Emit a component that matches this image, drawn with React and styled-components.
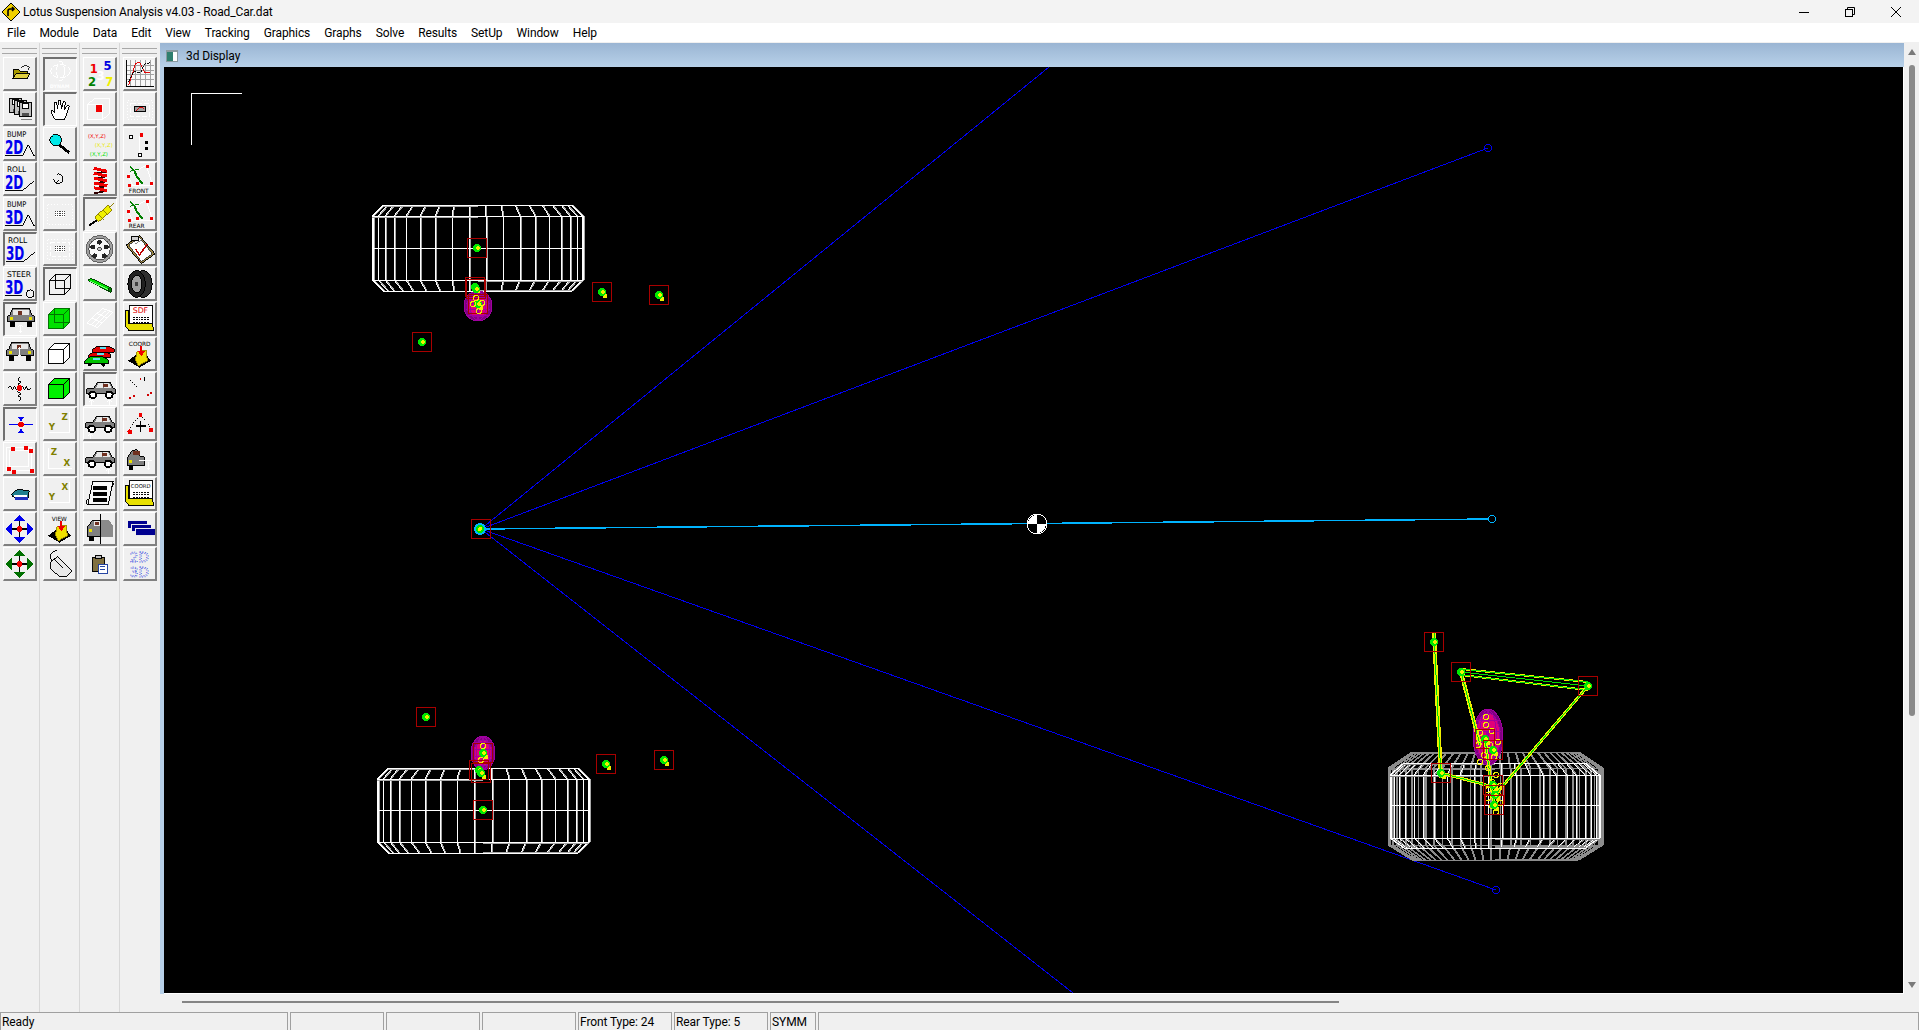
import React from 'react';
import styled, { createGlobalStyle } from 'styled-components';

const GlobalStyle = createGlobalStyle`
	html, body {
		margin: 0;
		padding: 0;
		overflow: hidden;
		background: #f0f0f0;
	}
`;

const Page = styled.div`
	width: 1919px;
	height: 1030px;
	display: flex;
	flex-direction: column;
	overflow: hidden;
	font-family: Roboto, 'Liberation Sans', sans-serif;
	font-size: 12px;
	color: #000;
`;

const TitleBar = styled.div`
	height: 23px;
	display: flex;
	align-items: center;
	background: #f3f3f3;
	padding-left: 2px;
`;

const TitleText = styled.span`
	margin-left: 3px;
	flex: 1;
	font-size: 12px;
	letter-spacing: -0.13px;
`;

const WindowButton = styled.div`
	width: 46px;
	height: 23px;
	display: flex;
	align-items: center;
	justify-content: center;
`;

const MenuBar = styled.div`
	height: 20px;
	display: flex;
	align-items: center;
	padding-top: 1px;
	background: #fff;
	border-bottom: 1px solid #f0f0f0;
	box-sizing: border-box;
`;

const MenuItem = styled.span`
	padding: 0 7px;
	line-height: 18px;
	letter-spacing: -0.1px;
`;

const Workspace = styled.div`
	height: 969px;
	display: flex;
`;

const ToolDock = styled.div`
	display: flex;
	width: 160px;
	flex: none;
	background: #f0f0f0;
`;

const ToolColumn = styled.div`
	width: 40px;
	box-sizing: border-box;
	padding: 0 2px 0 3px;
	display: flex;
	flex-direction: column;
	gap: 1px;
	border-right: 1px solid #d8d8d8;
	&:last-child {
		border-right: none;
	}
`;

const Grip = styled.div`
	height: 4px;
	margin: 5px 0 2px -1px;
	width: 35px;
	border-top: 1px solid #a8a8a8;
	border-bottom: 1px solid #a8a8a8;
`;

const ToolButton = styled.div`
	width: 34px;
	height: 34px;
	box-sizing: border-box;
	background: #f0f0f0;
	border: 1px solid;
	border-color: ${p => (p.$down ? '#707070 #fff #fff #707070' : '#fff #808080 #808080 #fff')};
	border-width: ${p => (p.$down ? '2px 1px 1px 2px' : '1px 2px 2px 1px')};
	display: flex;
	align-items: center;
	justify-content: center;
	overflow: hidden;
`;

const MdiColumn = styled.div`
	flex: 1;
	display: flex;
	flex-direction: column;
	min-width: 0;
`;

const MdiRow = styled.div`
	height: 951px;
	display: flex;
`;

const ChildWindow = styled.div`
	width: 1744px;
	display: flex;
	flex-direction: column;
	background: #b7d0e8;
	box-sizing: border-box;
`;

const ChildTitle = styled.div`
	height: 24px;
	flex: none;
	display: flex;
	align-items: center;
	gap: 8px;
	padding: 1px 0 0 6px;
	box-sizing: border-box;
	letter-spacing: -0.1px;
	background: linear-gradient(#9ab5d3, #b8d1e9);
`;

const ChildIcon = styled.div`
	width: 12px;
	height: 12px;
	box-sizing: border-box;
	border: 1px solid #8a9aa0;
	border-top-width: 2px;
	background: linear-gradient(90deg, #2f7f6f 0 60%, #fff 60%);
`;

const CanvasFrame = styled.div`
	margin-left: 4px;
	height: 927px;
	background: #000;
	border-right: 1px solid #fff;
	border-bottom: 1px solid #fff;
	box-sizing: border-box;
	display: flex;
`;

const VScroll = styled.div`
	width: 15px;
	flex: none;
	display: flex;
	flex-direction: column;
	align-items: center;
	padding: 6px 0;
	box-sizing: border-box;
	background: #f0f0f0;
`;

const ScrollArrow = styled.div`
	width: 0;
	height: 0;
	border-left: 4px solid transparent;
	border-right: 4px solid transparent;
	${p => (p.$down ? 'border-top: 6px solid #7a7a7a; margin-top: auto;' : 'border-bottom: 6px solid #7a7a7a;')}
`;

const ScrollThumb = styled.div`
	width: 6px;
	height: 651px;
	margin-top: 10px;
	background: #8a8a8a;
	border-radius: 3px;
`;

const HScroll = styled.div`
	height: 18px;
	display: flex;
	align-items: center;
	padding: 0 0 2px 22px;
	box-sizing: border-box;
`;

const HThumb = styled.div`
	width: 1157px;
	height: 2px;
	background: #858585;
`;

const StatusBar = styled.div`
	height: 18px;
	display: flex;
	gap: 2px;
	background: #f0f0f0;
`;

const StatusPane = styled.div`
	width: ${p => (p.$w ? `${p.$w}px` : 'auto')};
	flex: ${p => (p.$w ? 'none' : '1')};
	box-sizing: border-box;
	border-top: 1px solid #a0a0a0;
	border-left: 1px solid #a0a0a0;
	border-right: 1px solid #a0a0a0;
	padding-left: 1px;
	line-height: 18px;
	white-space: nowrap;
	letter-spacing: -0.1px;
`;

const PX = { shapeRendering: 'crispEdges' };
const SMALL = { fontFamily: 'DejaVu Sans, sans-serif', shapeRendering: 'auto' };

const Ico = ({ children }) => (
	<svg width="32" height="32" viewBox="1 1 32 32" style={PX}>
		{children}
	</svg>
);

const Label = ({ x, y, size = 7.5, w, fill = '#000', bold, children }) => (
	<text x={x} y={y} fontSize={size} fill={fill} fontWeight={bold ? 700 : 400} textLength={w} lengthAdjust={w ? 'spacingAndGlyphs' : undefined} style={SMALL}>
		{children}
	</text>
);

const CurveIcon = ({ top, big, kind }) => (
	<Ico>
		<Label x={4} y={10} size={8} w={top.length * 5}>{top}</Label>
		<Label x={2} y={27} size={20} w={19} fill="#0000f0" bold>{big}</Label>
		<polyline points="2,29 20,29" fill="none" stroke="#000" />
		{kind === 'bump' && <polyline points="20,29 26,18 32,29 33,29" fill="none" stroke="#000" />}
		{kind === 'roll' && <polyline points="20,29 32,19" fill="none" stroke="#000" />}
		{kind === 'steer' && <circle cx="28" cy="27" r="4" fill="#f0f0f0" stroke="#000" />}
	</Ico>
);

const Folder = () => (
	<Ico>
		<polygon points="11,12 16,12 17,14 25,14 25,18 11,22" fill="#a89a00" stroke="#000" />
		<polygon points="10,22 14,16 28,16 25,22" fill="#e0d040" stroke="#000" />
		<polyline points="19,10 23,8 27,10 26,13" fill="none" stroke="#222" />
	</Ico>
);

const Floppies = () => (
	<Ico>
		{[7, 12, 17].map((v, i) => (
			<g key={v}>
				<rect x={v} y={6 + i * 2} width={12} height={15} fill="#c0c0c0" stroke="#000" />
				<rect x={v + 3} y={7 + i * 2} width={6} height={5} fill="#fff" stroke="#000" />
				<rect x={v + 3} y={17 + i * 2} width={7} height={3} fill="#505050" />
			</g>
		))}
		<rect x="19" y="27" width="11" height="1" fill="#808080" />
	</Ico>
);

const Arrow = ({ x, y, down, color = '#fff', len = 7 }) => (
	<g stroke={color} fill="none">
		<line x1={x} y1={y} x2={x} y2={y + len} />
		<polyline points={down ? `${x - 2},${y + len - 2} ${x},${y + len} ${x + 2},${y + len - 2}` : `${x - 2},${y + 2} ${x},${y} ${x + 2},${y + 2}`} />
	</g>
);

const CarFront = ({ arrow }) => (
	<Ico>
		<polygon points="9,5 26,5 29,12 31,13 31,19 4,19 4,13 6,12" fill="#808080" stroke="#000" />
		<rect x="9" y="7" width="17" height="5" fill="#e8e8e8" />
		<rect x="14" y="8" width="5" height="4" fill="#703020" />
		<rect x="6" y="14" width="3" height="3" fill="#e8e000" />
		<rect x="26" y="14" width="3" height="3" fill="#e8e000" />
		<rect x="6" y="19" width="5" height="5" fill="#000" />
		<rect x="24" y="19" width="5" height="5" fill="#000" />
		{arrow === 'in' ? (
			<>
				<Arrow x={17} y={10} color="#fff" len={5} />
				<Arrow x={17} y={15} down color="#fff" len={5} />
			</>
		) : (
			<>
				<Arrow x={17} y={22} color="#fff" len={4} />
				<Arrow x={17} y={26} down color="#fff" len={4} />
			</>
		)}
	</Ico>
);

const CarSide = ({ up, back, front }) => (
	<Ico>
		<polygon points="3,16 10,15 14,9 27,9 30,15 32,16 32,21 3,21" fill="#808080" stroke="#000" />
		<polygon points="15,10 20,10 20,15 12,15" fill="#e8e8e8" />
		<polygon points="21,10 26,10 28,15 21,15" fill="#e8e8e8" />
		<rect x="20" y="11" width="5" height="3" fill="#703020" />
		<circle cx="9" cy="22" r="3.5" fill="#fff" stroke="#000" strokeWidth="2" />
		<circle cx="26" cy="22" r="3.5" fill="#fff" stroke="#000" strokeWidth="2" />
		{(up || back) && <Arrow x={8} y={27} />}
		{(up || front) && <Arrow x={26} y={27} />}
	</Ico>
);

const CrossArrows = ({ color }) => (
	<Ico>
		<rect x="5" y="16" width="25" height="2" fill="#000" />
		<rect x="16" y="5" width="2" height="25" fill="#000" />
		<polygon points="17,3 23,9 11,9" fill={color} />
		<polygon points="17,31 23,25 11,25" fill={color} />
		<polygon points="3,17 9,11 9,23" fill={color} />
		<polygon points="31,17 25,11 25,23" fill={color} />
		<circle cx="17" cy="17" r="3" fill="#f00000" />
	</Ico>
);

const SpringCross = () => (
	<Ico>
		<polyline points="5,16 8,14 10,18 12,14 14,18 20,14 22,18 24,14 26,18 29,16" fill="none" stroke="#000" />
		<polyline points="17,5 15,8 19,10 15,12 19,14 15,20 19,22 15,24 19,26 17,29" fill="none" stroke="#000" />
		<circle cx="17" cy="16" r="3" fill="#f00000" />
	</Ico>
);

const BlueCross = () => (
	<Ico>
		<rect x="5" y="16" width="25" height="1" fill="#0000f0" />
		<rect x="17" y="4" width="1" height="26" fill="#0000f0" />
		<polygon points="17.5,13 14,9 21,9" fill="#0000f0" />
		<polygon points="17.5,21 14,25 21,25" fill="#0000f0" />
		<circle cx="17.5" cy="16.5" r="3" fill="#f00000" />
	</Ico>
);

const DotBox = () => (
	<Ico>
		<rect x="7" y="8" width="19" height="17" fill="none" stroke="#fff" />
		<rect x="4" y="5" width="25" height="24" fill="none" stroke="#fff" />
		{[[8, 5], [22, 4], [27, 7], [4, 25], [9, 28], [28, 27]].map(([x, y]) => (
			<rect key={`${x}-${y}`} x={x} y={y} width="4" height="4" fill="#f00000" />
		))}
	</Ico>
);

const Notebook = () => (
	<Ico>
		<polygon points="9,17 15,12 27,14 26,21 10,20" fill="#208090" stroke="#000" />
		<rect x="12" y="20" width="14" height="3" fill="#2030c0" />
		<rect x="11" y="18" width="14" height="2" fill="#fff" />
	</Ico>
);

const Dynam = () => (
	<Ico>
		<g fill="none" stroke="#fff">
			<ellipse cx="17" cy="13" rx="10" ry="7" strokeDasharray="6 2" />
			<ellipse cx="17" cy="13" rx="4" ry="10" strokeDasharray="6 2" />
		</g>
		<Label x={6} y={30} size={5}  fill="#fff" bold>DYNAM</Label>
	</Ico>
);

const Hand = () => (
	<Ico>
		<path d="M10 25 L7 19 L8 17 L11 20 L11 9 L13 9 L14 16 L15 7 L17 7 L18 16 L20 8 L22 9 L21 17 L24 12 L26 13 L23 22 L21 27 L12 27 Z" fill="#fff" stroke="#000" />
	</Ico>
);

const Magnifier = () => (
	<Ico>
		<line x1="17" y1="18" x2="27" y2="26" stroke="#000" strokeWidth="3" />
		<circle cx="13" cy="13" r="6" fill="#00e8e8" stroke="#000" />
	</Ico>
);

const Rotate = () => (
	<Ico>
		<path d="M14 12 A 5 5 0 1 1 13 21" fill="none" stroke="#000" />
		<polyline points="11,17 13,21 16,19" fill="none" stroke="#000" />
	</Ico>
);

const Dither = () => (
	<g>
		<rect x="12" y="14" width="11" height="6" fill="#fff" />
		{[14, 16, 18].map(y => (
			<line key={y} x1="12" y1={y + 0.5} x2="23" y2={y + 0.5} stroke="#404040" strokeDasharray="1 1" />
		))}
	</g>
);

const DottedPatch = ({ corners }) => (
	<Ico>
		<rect x="5" y="7" width="25" height="21" fill="none" stroke="#fff" strokeDasharray="1 2" />
		{corners && <rect x="8" y="10" width="19" height="15" fill="none" stroke="#fff" strokeDasharray="4 2" />}
		<Dither />
	</Ico>
);

const Cube = ({ fill = 'none', stroke = '#000', inner = true }) => (
	<Ico>
		<polygon points="6,12 12,6 27,6 27,21 21,27 6,27" fill={fill} stroke={stroke} />
		<polyline points="6,12 21,12 21,27" fill="none" stroke={stroke} />
		<line x1="21" y1="12" x2="27" y2="6" stroke={stroke} />
		{inner && <polyline points="12,6 12,21 27,21 M12,21 L6,27" fill="none" stroke={stroke} />}
	</Ico>
);

const Axes = ({ a, b, ax, ay, bx, by, corner }) => (
	<Ico>
		<Label x={ax} y={ay} size={9} fill="#808000" bold>{a}</Label>
		<Label x={bx} y={by} size={9} fill="#808000" bold>{b}</Label>
		<polyline points={corner} fill="none" stroke="#fff" />
	</Ico>
);

const ViewFiles = ({ title }) => (
	<Ico>
		<Label x={title === 'VIEW' ? 9 : 6} y={9} size={6}>{title}</Label>
		<polygon points="5,24 13,18 24,18 29,24 17,31" fill="#000" />
		<polygon points="13,24 14,15 24,13 25,24 16,29" fill="#f0e000" stroke="#a09000" />
		<rect x="18" y="9" width="2" height="6" fill="#f00000" />
		<polygon points="15,14 23,14 19,19" fill="#f00000" />
	</Ico>
);

const Mouse = () => (
	<Ico>
		<polygon points="8,15 15,9 30,24 24,30 17,30 8,22" fill="#e8e8e8" stroke="#000" />
		<line x1="11" y1="12" x2="20" y2="21" stroke="#000" />
		<path d="M9 14 Q4 5 14 3" fill="none" stroke="#000" />
	</Ico>
);

const Numbers = () => (
	<Ico>
		<Label x={7} y={16} size={12} fill="#f00000" bold>1</Label>
		<Label x={21} y={13} size={12} fill="#0000e0" bold>5</Label>
		<Label x={5} y={29} size={12} fill="#008000" bold>2</Label>
		<Label x={14} y={23} size={12} fill="#fff" bold>3</Label>
		<Label x={23} y={29} size={12} fill="#f0f000" bold>7</Label>
	</Ico>
);

const RedCube = () => (
	<Ico>
		<polygon points="5,12 12,6 27,6 27,22 20,28 5,28" fill="none" stroke="#fff" />
		<polyline points="5,12 20,12 20,28 M20,12 L27,6" fill="none" stroke="#fff" />
		<rect x="13" y="13" width="7" height="7" fill="#f00000" />
	</Ico>
);

const Xyz = () => (
	<Ico>
		<Label x={5} y={11} size={5.5} fill="#f00000">(X,Y,Z)</Label>
		<Label x={12} y={20} size={5.5} fill="#e8e800">(X,Y,Z)</Label>
		<Label x={7} y={29} size={5.5} fill="#00e000">(X,Y,Z)</Label>
	</Ico>
);

const Spring = () => (
	<Ico>
		{[6, 11, 16, 21, 26].map(y => (
			<g key={y} fill="none">
				<line x1="25" y1={y + 3} x2="11" y2={y + 6} stroke="#300000" strokeWidth="2" />
				<line x1="11" y1={y} x2="25" y2={y + 3} stroke="#f00000" strokeWidth="3" />
			</g>
		))}
	</Ico>
);

const Shock = () => (
	<Ico>
		<line x1="5" y1="28" x2="14" y2="22" stroke="#000" strokeWidth="2" />
		<polygon points="11,19 25,7 29,12 15,24" fill="#f0f000" stroke="#908000" />
		<line x1="15" y1="16" x2="20" y2="22" stroke="#908000" />
		<line x1="20" y1="12" x2="25" y2="17" stroke="#908000" />
		<line x1="27" y1="9" x2="31" y2="5" stroke="#908000" />
	</Ico>
);

const Rim = () => (
	<Ico>
		<circle cx="17" cy="17" r="14" fill="#a0a0a0" stroke="#606060" />
		<circle cx="17" cy="17" r="11" fill="#f8f8f8" stroke="#505050" />
		{[[17, 10], [24, 15], [22, 24], [12, 24], [10, 15]].map(([x, y]) => (
			<circle key={`${x}${y}`} cx={x} cy={y} r="2.5" fill="#222" />
		))}
		<circle cx="17" cy="17" r="2" fill="#c0c0c0" stroke="#444" />
	</Ico>
);

const Tube = () => (
	<Ico>
		<polygon points="5,13 8,11 29,21 27,25" fill="#00e000" stroke="#004000" />
		<line x1="7" y1="14" x2="27" y2="23" stroke="#80ff80" />
		<ellipse cx="28" cy="23" rx="1.5" ry="2.5" fill="#008000" stroke="#003000" />
	</Ico>
);

const GridPlane = () => (
	<Ico>
		<g fill="none" stroke="#fff">
			<polygon points="4,21 20,6 31,10 15,26" />
			<line x1="9" y1="16" x2="20" y2="21" />
			<line x1="14" y1="11" x2="25" y2="16" />
			<line x1="8" y1="23" x2="24" y2="8" />
			<line x1="12" y1="25" x2="28" y2="9" />
		</g>
	</Ico>
);

const CarStack = () => (
	<Ico>
		<polygon points="10,12 15,9 26,9 32,12 32,15 10,15" fill="#e00000" stroke="#000" />
		<rect x="17" y="10" width="7" height="2" fill="#60e0f0" />
		<polygon points="6,18 11,15 24,15 29,18 28,21 6,21" fill="#e00000" stroke="#000" />
		<rect x="14" y="16" width="8" height="2" fill="#60e0f0" />
		<polygon points="2,24 7,20 20,20 26,23 26,27 2,27" fill="#00c000" stroke="#000" />
		<rect x="10" y="21" width="8" height="2" fill="#60e0f0" />
		<circle cx="7" cy="28" r="2" fill="#000" />
		<circle cx="21" cy="28" r="2" fill="#000" />
	</Ico>
);

const Scroll = () => (
	<Ico>
		<polygon points="10,4 31,4 26,28 5,28" fill="#f8f8f8" stroke="#000" />
		{[9, 15, 21].map(y => (
			<rect key={y} x={10} y={y} width={15} height={4} fill="#000" />
		))}
		<path d="M5 22 Q1 26 5 28 M30 4 Q33 8 29 10" fill="none" stroke="#000" />
	</Ico>
);

const HalfCar = () => (
	<Ico>
		<polygon points="5,14 10,8 18,8 18,25 5,25" fill="#808080" stroke="#000" />
		<polygon points="19,8 27,8 31,14 31,25 19,25" fill="#8a8a8a" />
		<rect x="11" y="9" width="6" height="5" fill="#e8e8e8" />
		<rect x="12" y="10" width="4" height="3" fill="#703020" />
		<rect x="6" y="17" width="3" height="3" fill="#e8e000" />
		<rect x="6" y="25" width="5" height="4" fill="#000" />
		<rect x="17" y="2" width="2" height="31" fill="#000" />
	</Ico>
);

const SmallClip = () => (
	<Ico>
		<rect x="10" y="10" width="12" height="15" fill="#807040" stroke="#000" />
		<rect x="13" y="8" width="6" height="3" fill="#c0c0c0" stroke="#000" />
		<rect x="16" y="17" width="9" height="10" fill="#fff" stroke="#2040a0" />
		<line x1="18" y1="20" x2="23" y2="20" stroke="#2040a0" />
		<line x1="18" y1="23" x2="23" y2="23" stroke="#2040a0" />
	</Ico>
);

const ChartIcon = () => (
	<Ico>
		<rect x="4" y="3" width="28" height="27" fill="#f8f8f8" />
		<g stroke="#a0a0a0">
			{[8, 13, 18, 23, 28].map(v => <line key={v} x1={v} y1="3" x2={v} y2="30" />)}
			{[8, 13, 18, 23].map(v => <line key={v} x1="4" y1={v} x2="32" y2={v} />)}
		</g>
		<polyline points="4,3 4,30 32,30" fill="none" stroke="#000" />
		<polyline points="6,28 13,6 17,5 22,15 28,16" fill="none" stroke="#e00000" />
		<polyline points="6,25 11,14 18,16 22,7 29,5" fill="none" stroke="#000" strokeDasharray="3 1" />
	</Ico>
);

const ChartPatch = () => (
	<Ico>
		<rect x="5" y="8" width="25" height="20" fill="none" stroke="#fff" strokeDasharray="1 2" />
		<rect x="8" y="11" width="19" height="14" fill="none" stroke="#fff" strokeDasharray="5 2" />
		<rect x="12" y="14" width="11" height="6" fill="#a0a0a0" stroke="#000" />
		<polyline points="13,19 17,15 22,17" fill="none" stroke="#e00000" />
	</Ico>
);

const PointsIcon = () => (
	<Ico>
		<rect x="7" y="8" width="3" height="3" fill="#fff" stroke="#000" />
		<rect x="17" y="6" width="4" height="4" fill="#f00000" />
		<rect x="23" y="14" width="3" height="3" fill="#000" />
		<rect x="23" y="20" width="3" height="3" fill="#000" />
		<rect x="16" y="27" width="3" height="3" fill="#fff" stroke="#000" />
		<polyline points="17,9 17,26 M18,21 L24,21" fill="none" stroke="#fff" />
	</Ico>
);

const Arms = ({ title }) => (
	<Ico>
		<polygon points="5,13 24,3 31,24 10,24" fill="none" stroke="#fff" />
		<polyline points="7,4 12,9 14,14 20,22" fill="none" stroke="#008000" strokeWidth="2" />
		<polyline points="7,9 16,7 M9,14 L20,11 M12,19 L22,17" fill="none" stroke="#008000" />
		{[[4, 13], [24, 3], [28, 20], [13, 20], [5, 22]].map(([x, y]) => (
			<rect key={`${x}${y}`} x={x} y={y} width="3" height="3" fill="#f00000" />
		))}
		<Label x={6} y={31} size={6}>{title}</Label>
	</Ico>
);

const ClipBoard = () => (
	<Ico>
		<polygon points="3,13 17,3 33,22 19,32" fill="#a08840" stroke="#000" />
		<polygon points="6,13 17,5 30,22 19,30" fill="#fff" stroke="#404040" />
		<rect x="9" y="4" width="7" height="4" fill="#d0d0d0" stroke="#000" />
		<line x1="12" y1="12" x2="20" y2="7" stroke="#808080" />
		<polyline points="13,17 17,23 25,12" fill="none" stroke="#c00000" strokeWidth="1.5" />
	</Ico>
);

const Tyre = () => (
	<Ico>
		<ellipse cx="21" cy="17" rx="9" ry="14" fill="#303030" stroke="#000" />
		<ellipse cx="14" cy="17" rx="9" ry="14" fill="#202020" stroke="#000" />
		<ellipse cx="14" cy="17" rx="5.5" ry="9" fill="#a0a0a0" stroke="#000" />
		<circle cx="14" cy="17" r="2" fill="#404040" />
	</Ico>
);

const FolderDoc = ({ title, color = '#000' }) => (
	<Ico>
		<rect x="7" y="3" width="23" height="22" fill="#fff" stroke="#000" />
		<Label x={title === 'SDF' ? 10 : 8} y={11} size={title === 'SDF' ? 8 : 5.5} fill={color}>{title}</Label>
		<g stroke="#000">
			<line x1="10" y1="15" x2="27" y2="15" strokeDasharray="2 1" />
			<line x1="10" y1="18" x2="27" y2="18" strokeDasharray="2 1" />
			<line x1="10" y1="21" x2="27" y2="21" strokeDasharray="2 1" />
		</g>
		<polygon points="3,8 6,8 6,22 30,22 32,29 6,29 3,25" fill="#e8e000" stroke="#000" />
	</Ico>
);

const DiagonalDots = () => (
	<Ico>
		<line x1="7" y1="8" x2="28" y2="29" stroke="#000" strokeDasharray="1 2" />
		{[[17, 6], [6, 25], [10, 23], [28, 20], [25, 22]].map(([x, y]) => (
			<rect key={`${x}${y}`} x={x} y={y} width="2" height="2" fill="#d00000" />
		))}
		<rect x="22" y="5" width="1" height="4" fill="#000" />
	</Ico>
);

const TriangleDots = () => (
	<Ico>
		<path d="M7 24 Q10 14 18 9 Q24 13 29 23" fill="none" stroke="#000" strokeDasharray="1 2" />
		<rect x="16" y="6" width="4" height="4" fill="#f00000" />
		<circle cx="7" cy="25" r="2.5" fill="#f00000" />
		<circle cx="29" cy="23" r="2.5" fill="#f00000" />
		<rect x="13" y="18" width="11" height="2" fill="#000" />
		<rect x="17" y="14" width="2" height="11" fill="#000" />
	</Ico>
);

const CarRear = () => (
	<Ico>
		<polygon points="5,15 9,9 14,7 17,14 22,15 22,24 5,24" fill="#808080" stroke="#000" />
		<rect x="10" y="9" width="7" height="4" fill="#703020" />
		<rect x="6" y="18" width="3" height="3" fill="#e8e000" />
		<rect x="6" y="24" width="4" height="4" fill="#000" />
		<line x1="16" y1="19" x2="30" y2="19" stroke="#fff" />
		<Arrow x={26} y={20} down color="#fff" len={8} />
	</Ico>
);

const WindowStack = () => (
	<Ico>
		{[[5, 8], [9, 12], [13, 16]].map(([x, y]) => (
			<rect key={x} x={x} y={y} width="20" height="8" fill="#000090" stroke="#f0f0f0" />
		))}
	</Ico>
);

const DIM_TEXT = { fontFamily: 'DejaVu Sans, sans-serif', shapeRendering: 'crispEdges' };

const Dims = () => (
	<Ico>
		<text x="7" y="15" fontSize="14" fill="none" stroke="#2030e0" strokeWidth="0.8" strokeDasharray="1 1.5" style={DIM_TEXT}>2D</text>
		<text x="7" y="30" fontSize="14" fill="none" stroke="#2030e0" strokeWidth="0.8" strokeDasharray="1 1.5" style={DIM_TEXT}>3D</text>
	</Ico>
);

const TOOLBARS = [
	[
		[<Folder />], [<Floppies />],
		[<CurveIcon top="BUMP" big="2D" kind="bump" />], [<CurveIcon top="ROLL" big="2D" kind="roll" />],
		[<CurveIcon top="BUMP" big="3D" kind="bump" />], [<CurveIcon top="ROLL" big="3D" kind="roll" />, true],
		[<CurveIcon top="STEER" big="3D" kind="steer" />],
		[<CarFront />, true], [<CarFront arrow="in" />],
		[<SpringCross />], [<BlueCross />, true], [<DotBox />], [<Notebook />],
		[<CrossArrows color="#0000f0" />], [<CrossArrows color="#007000" />],
	],
	[
		[<Dynam />, true], [<Hand />, true], [<Magnifier />], [<Rotate />],
		[<DottedPatch />], [<DottedPatch corners />], [<Cube />, true],
		[<Cube fill="#00e000" stroke="#007000" />], [<Cube fill="#fff" inner={false} />], [<Cube fill="#00f000" inner={false} />],
		[<Axes a="Z" b="Y" ax={19} ay={13} bx={6} by={23} corner="27,5 27,26 6,26" />],
		[<Axes a="Z" b="X" ax={8} ay={13} bx={21} by={24} corner="6,6 6,27 30,27" />],
		[<Axes a="X" b="Y" ax={19} ay={13} bx={6} by={23} corner="27,5 27,26 6,26" />],
		[<ViewFiles title="VIEW" />], [<Mouse />],
	],
	[
		[<Numbers />], [<RedCube />], [<Xyz />], [<Spring />], [<Shock />, true], [<Rim />], [<Tube />], [<GridPlane />],
		[<CarStack />], [<CarSide up />, true], [<CarSide back />], [<CarSide front />],
		[<Scroll />], [<HalfCar />], [<SmallClip />],
	],
	[
		[<ChartIcon />], [<ChartPatch />], [<PointsIcon />], [<Arms title="FRONT" />], [<Arms title="REAR" />],
		[<ClipBoard />], [<Tyre />], [<FolderDoc title="SDF" color="#e00000" />], [<ViewFiles title="COORD" />],
		[<DiagonalDots />], [<TriangleDots />], [<CarRear />], [<FolderDoc title="COORD" />], [<WindowStack />], [<Dims />],
	],
];

const MENUS = ['File', 'Module', 'Data', 'Edit', 'View', 'Tracking', 'Graphics', 'Graphs', 'Solve', 'Results', 'SetUp', 'Window', 'Help'];

const Wheel = ({ x0, x1, ys, color = '#fff', shade = '#a8a8a8', n = 20, inset = 11 }) => {
	const cx = (x0 + x1) / 2;
	const r = (x1 - x0) / 2;
	const [t, b1, m, b2, b] = ys;
	const sines = Array.from({ length: n }, (_, i) => Math.sin(((-90 + (180 * i) / (n - 1)) * Math.PI) / 180));
	return (
		<g fill="none">
			{sines.map((s, i) => {
				const x = Math.round(cx + r * s);
				const xt = Math.round(cx + (r - inset) * s);
				return (
					<g key={i}>
						{i % 3 !== 2 && <line x1={x + 1} y1={b1} x2={x + 1} y2={b2} stroke={shade} />}
						<polyline points={`${xt},${t} ${x},${b1} ${x},${b2} ${xt},${b}`} stroke={color} />
						<line x1={xt + 1} y1={t} x2={x + 1} y2={b1} stroke={shade} />
						<line x1={x + 1} y1={b2} x2={xt + 1} y2={b} stroke={shade} />
					</g>
				);
			})}
			<g stroke={shade}>
				<line x1={cx - r + inset} y1={t + 1} x2={cx} y2={t + 1} />
				<line x1={x0} y1={b1 + 1} x2={cx} y2={b1 + 1} />
				<line x1={cx} y1={b2 + 1} x2={x1} y2={b2 + 1} />
				<line x1={cx} y1={b - 1} x2={cx + r - inset} y2={b - 1} />
			</g>
			<g stroke={color}>
				<line x1={cx - r + inset} y1={t} x2={cx + r - inset} y2={t} />
				<line x1={x0} y1={b1} x2={x1} y2={b1} />
				<line x1={x0} y1={m} x2={x1} y2={m} />
				<line x1={x0} y1={b2} x2={x1} y2={b2} />
				<line x1={cx - r + inset} y1={b} x2={cx + r - inset} y2={b} />
			</g>
		</g>
	);
};

const Marker = ({ x, y, box = true, extra = false }) => (
	<g>
		{box && <rect x={x - 9.5} y={y - 9.5} width="19" height="19" fill="none" stroke="#a80000" />}
		{extra && <circle cx={x + 3} cy={y + 4} r="2.5" fill="#f0f000" />}
		<circle cx={x} cy={y} r="4" fill="#00e800" />
		<circle cx={x + 1} cy={y} r="1.8" fill="#f0f000" />
	</g>
);

const Rings = ({ pts }) => (
	<g fill="none" stroke="#f0f000">
		{pts.map(([x, y]) => (
			<circle key={`${x}-${y}`} cx={x} cy={y} r="2.5" />
		))}
	</g>
);

const Blob = ({ x, y, rx, ry }) => (
	<g fill="none">
		<ellipse cx={x} cy={y} rx={rx} ry={ry} fill="#800080" stroke="#a000a0" />
		<ellipse cx={x} cy={y} rx={rx - 3} ry={ry - 4} fill="#e0007a" stroke="#a000a0" />
		{[-0.6, -0.2, 0.2, 0.6].map(k => (
			<line key={k} x1={x - rx + 2} y1={y + k * ry} x2={x + rx - 2} y2={y + k * ry} stroke="#a000a0" />
		))}
		{[-0.5, 0, 0.5].map(k => (
			<ellipse key={k} cx={x} cy={y} rx={Math.abs(k) * rx + 1} ry={ry - 1} stroke="#a000a0" />
		))}
	</g>
);

const Arm = ({ from, to, w = 3 }) => (
	<g>
		<line x1={from[0]} y1={from[1]} x2={to[0]} y2={to[1]} stroke="#f0f000" strokeWidth={w} />
		<line x1={from[0]} y1={from[1]} x2={to[0]} y2={to[1]} stroke="#00e000" />
	</g>
);

const HUB = [481, 529];
const SPOKES = [[1049, 67], [1488, 148], [1496, 890], [1073, 993]];
const REAR_RINGS = [
	[1486, 717], [1486, 725], [1480, 733], [1492, 731], [1478, 745], [1490, 745], [1498, 742],
	[1484, 755], [1494, 757], [1480, 762], [1488, 768], [1496, 775], [1492, 782], [1500, 786],
	[1488, 790], [1498, 795], [1488, 798], [1492, 806], [1500, 803], [1496, 812],
];

const Scene = () => (
	<svg width="1739" height="926" viewBox="164 67 1739 926" style={{ display: 'block', ...PX }}>
		<polyline points="242,93 191,93 191,145" fill="none" stroke="#fff" />

		{SPOKES.map(([x, y]) => (
			<line key={x} x1={HUB[0]} y1={HUB[1]} x2={x} y2={y} stroke="#0000f0" />
		))}
		<circle cx="1488" cy="148" r="3.5" fill="none" stroke="#0000f0" />
		<circle cx="1496" cy="890" r="3.5" fill="none" stroke="#0000f0" />
		<line x1={HUB[0]} y1={HUB[1]} x2="1492" y2="519" stroke="#00b4ff" strokeWidth="1.5" />
		<circle cx="1492" cy="519" r="3.5" fill="#000" stroke="#00b4ff" />

		<circle cx="1037" cy="524" r="10" fill="#000" stroke="#fff" />
		<path d="M1037 524 L1037 515 A9 9 0 0 0 1028 524 Z M1037 524 L1037 533 A9 9 0 0 0 1046 524 Z" fill="#fff" />

		<rect x="471" y="519" width="19" height="19" fill="none" stroke="#a80000" />
		<circle cx="480" cy="529" r="6" fill="#00b4ff" />
		<circle cx="480" cy="529" r="4" fill="#00e800" />
		<circle cx="480" cy="529" r="2" fill="#f0f000" />

		<Wheel x0={372} x1={583} ys={[205, 216, 248, 280, 291]} />
		<Blob x={478} y={306} rx={14} ry={15} />
		<Marker x={477} y={248} />
		<Marker x={475} y={287} extra />
		<Marker x={476} y={289} />
		<Marker x={478} y={304} extra />
		<Rings pts={[[476, 298], [482, 303], [473, 304], [479, 311]]} />
		<Marker x={602} y={292} extra />
		<Marker x={659} y={295} extra />
		<Marker x={422} y={342} />

		<Wheel x0={377} x1={589} ys={[768, 779, 810, 842, 853]} />
		<Blob x={483} y={753} rx={12} ry={17} />
		<Marker x={483} y={753} extra />
		<Rings pts={[[483, 746], [481, 760]]} />
		<Marker x={479} y={770} />
		<Marker x={481} y={773} extra />
		<Marker x={483} y={810} />
		<Marker x={426} y={717} />
		<Marker x={606} y={764} extra />
		<Marker x={664} y={760} extra />

		<Wheel x0={1388} x1={1602} ys={[752, 768, 805, 845, 860]} color="#8c8c8c" shade="#8c8c8c" n={34} inset={24} />
		<Wheel x0={1390} x1={1600} ys={[763, 775, 805, 838, 848]} shade="#8c8c8c" n={24} inset={14} />
		<Blob x={1488} y={737} rx={15} ry={28} />
		<Arm from={[1434, 633]} to={[1441, 778]} w={4} />
		<Arm from={[1461, 672]} to={[1480, 745]} w={4} />
		<Arm from={[1461, 669]} to={[1588, 682]} w={2} />
		<Arm from={[1461, 675]} to={[1588, 690]} w={2} />
		<line x1="1461" y1="672" x2="1588" y2="686" stroke="#00e000" />
		<Arm from={[1588, 686]} to={[1495, 795]} />
		<Arm from={[1441, 773]} to={[1490, 786]} />
		<Arm from={[1485, 739]} to={[1494, 805]} />
		<Rings pts={REAR_RINGS} />
		<Marker x={1434} y={642} />
		<Marker x={1461} y={672} />
		<Marker x={1588} y={686} />
		<Marker x={1441} y={773} extra />
		<Marker x={1485} y={739} extra />
		<Marker x={1493} y={750} extra />
		<Marker x={1493} y={785} extra />
		<Marker x={1495} y={795} extra />
		<Marker x={1494} y={805} extra />
	</svg>
);

const App = () => (
	<Page>
		<GlobalStyle />
		<TitleBar>
			<svg width="18" height="18" viewBox="0 0 18 18">
				<polygon points="9,0 18,9 9,18 0,9" fill="#f0d000" stroke="#000" />
				<path d="M6 13 L6 8 Q6 6 8 6 L12 6 M10 4 L12 6 L10 8" fill="none" stroke="#000" strokeWidth="1.6" />
			</svg>
			<TitleText>Lotus Suspension Analysis v4.03 - Road_Car.dat</TitleText>
			<WindowButton>
				<svg width="10" height="10"><line x1="0" y1="5.5" x2="10" y2="5.5" stroke="#000" /></svg>
			</WindowButton>
			<WindowButton>
				<svg width="10" height="10" fill="none" stroke="#000">
					<rect x="0.5" y="2.5" width="7" height="7" />
					<polyline points="2.5,2.5 2.5,0.5 9.5,0.5 9.5,7.5 7.5,7.5" />
				</svg>
			</WindowButton>
			<WindowButton>
				<svg width="10" height="10" stroke="#000">
					<line x1="0" y1="0" x2="10" y2="10" />
					<line x1="10" y1="0" x2="0" y2="10" />
				</svg>
			</WindowButton>
		</TitleBar>
		<MenuBar>
			{MENUS.map(m => <MenuItem key={m}>{m}</MenuItem>)}
		</MenuBar>
		<Workspace>
			<ToolDock>
				{TOOLBARS.map((col, i) => (
					<ToolColumn key={i}>
						<Grip />
						{col.map(([icon, down], j) => (
							<ToolButton key={j} $down={down}>{icon}</ToolButton>
						))}
					</ToolColumn>
				))}
			</ToolDock>
			<MdiColumn>
				<MdiRow>
					<ChildWindow>
						<ChildTitle>
							<ChildIcon />
							<span>3d Display</span>
						</ChildTitle>
						<CanvasFrame>
							<Scene />
						</CanvasFrame>
					</ChildWindow>
					<VScroll>
						<ScrollArrow />
						<ScrollThumb />
						<ScrollArrow $down />
					</VScroll>
				</MdiRow>
				<HScroll>
					<HThumb />
				</HScroll>
			</MdiColumn>
		</Workspace>
		<StatusBar>
			<StatusPane $w={288}>Ready</StatusPane>
			<StatusPane $w={94} />
			<StatusPane $w={94} />
			<StatusPane $w={94} />
			<StatusPane $w={94}>Front Type: 24</StatusPane>
			<StatusPane $w={94}>Rear Type: 5</StatusPane>
			<StatusPane $w={46}>SYMM</StatusPane>
			<StatusPane />
		</StatusBar>
	</Page>
);

export default App;
